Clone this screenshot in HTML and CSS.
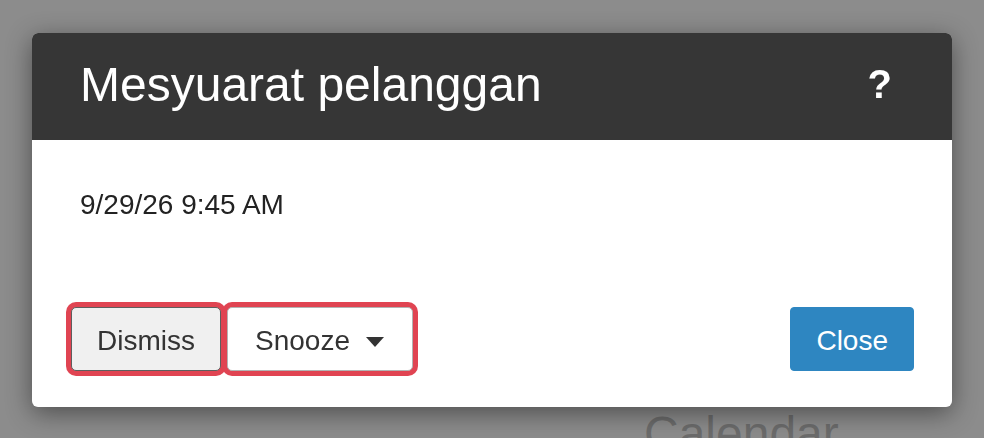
FILE: index.html
```html
<!DOCTYPE html>
<html lang="ms">
<head>
<meta charset="utf-8">
<title>Mesyuarat pelanggan</title>
<link rel="stylesheet" href="styles.css">
</head>
<body>
<div class="page">
  <h1 class="page-title">Calendar</h1>
</div>
<div class="modal" role="dialog" aria-labelledby="modal-title">
  <div class="modal-header">
    <h2 class="modal-title" id="modal-title">Mesyuarat pelanggan</h2>
    <span class="help">?</span>
  </div>
  <div class="modal-body">
    <p class="when">9/29/26 9:45 AM</p>
  </div>
  <div class="modal-footer">
    <div class="left-actions">
      <button class="btn btn-dismiss focus">Dismiss</button>
      <button class="btn btn-snooze focus">Snooze<svg class="caret" width="18" height="10" viewBox="0 0 18 10"><path d="M0 0 H18 L9 10 Z" fill="#333"/></svg></button>
    </div>
    <button class="btn btn-close">Close</button>
  </div>
</div>
</body>
</html>
```

FILE: styles.css
```css
html, body {
  margin: 0;
  padding: 0;
}
body {
  background: #8c8c8c;
  font-family: "Liberation Sans", Arial, sans-serif;
  width: 984px;
  height: 438px;
  overflow: hidden;
}
.page {
  display: flex;
  padding: 410px 0 0 644px;
}
.page-title {
  margin: 0;
  font-size: 48px;
  line-height: 48px;
  font-weight: normal;
  color: #6c6c6c;
}
.modal {
  position: fixed;
  left: 32px;
  top: 33px;
  width: 920px;
  background: #fff;
  border-radius: 6px;
  overflow: hidden;
  box-shadow: 0 6px 26px rgba(0, 0, 0, 0.45);
}
.modal-header {
  height: 107px;
  box-sizing: border-box;
  background: #363636;
  color: #fff;
  display: flex;
  align-items: center;
  justify-content: space-between;
  padding: 0 60px 3px 48px;
}
.modal-title {
  margin: 0;
  font-size: 48px;
  line-height: 48px;
  font-weight: normal;
}
.help {
  font-size: 40px;
  line-height: 40px;
  font-weight: bold;
  margin-bottom: 3px;
}
.modal-body {
  padding: 49px 48px 0;
}
.when {
  margin: 0;
  font-size: 28px;
  line-height: 32px;
  color: #222;
}
.modal-footer {
  display: flex;
  justify-content: space-between;
  align-items: center;
  padding: 86px 38px 36px 39px;
}
.left-actions {
  display: flex;
  gap: 6px;
}
.btn {
  font-family: inherit;
  font-size: 28px;
  line-height: 32px;
  padding: 17px 25px 13px;
  border-radius: 5px;
  border: 1px solid #b3b3b3;
  background: #fff;
  color: #333;
  margin: 0;
}
.btn-dismiss {
  background: #f0f0f0;
  border-color: #5e5e5e;
}
.btn-snooze {
  padding-left: 27px;
  padding-right: 28px;
}
.caret {
  margin-left: 16px;
  vertical-align: 3px;
}
.focus {
  box-shadow: 0 0 0 5px #e04452;
}
.btn-close {
  background: #2e86c1;
  border-color: #2e86c1;
  color: #fff;
  border-radius: 4px;
}
```
